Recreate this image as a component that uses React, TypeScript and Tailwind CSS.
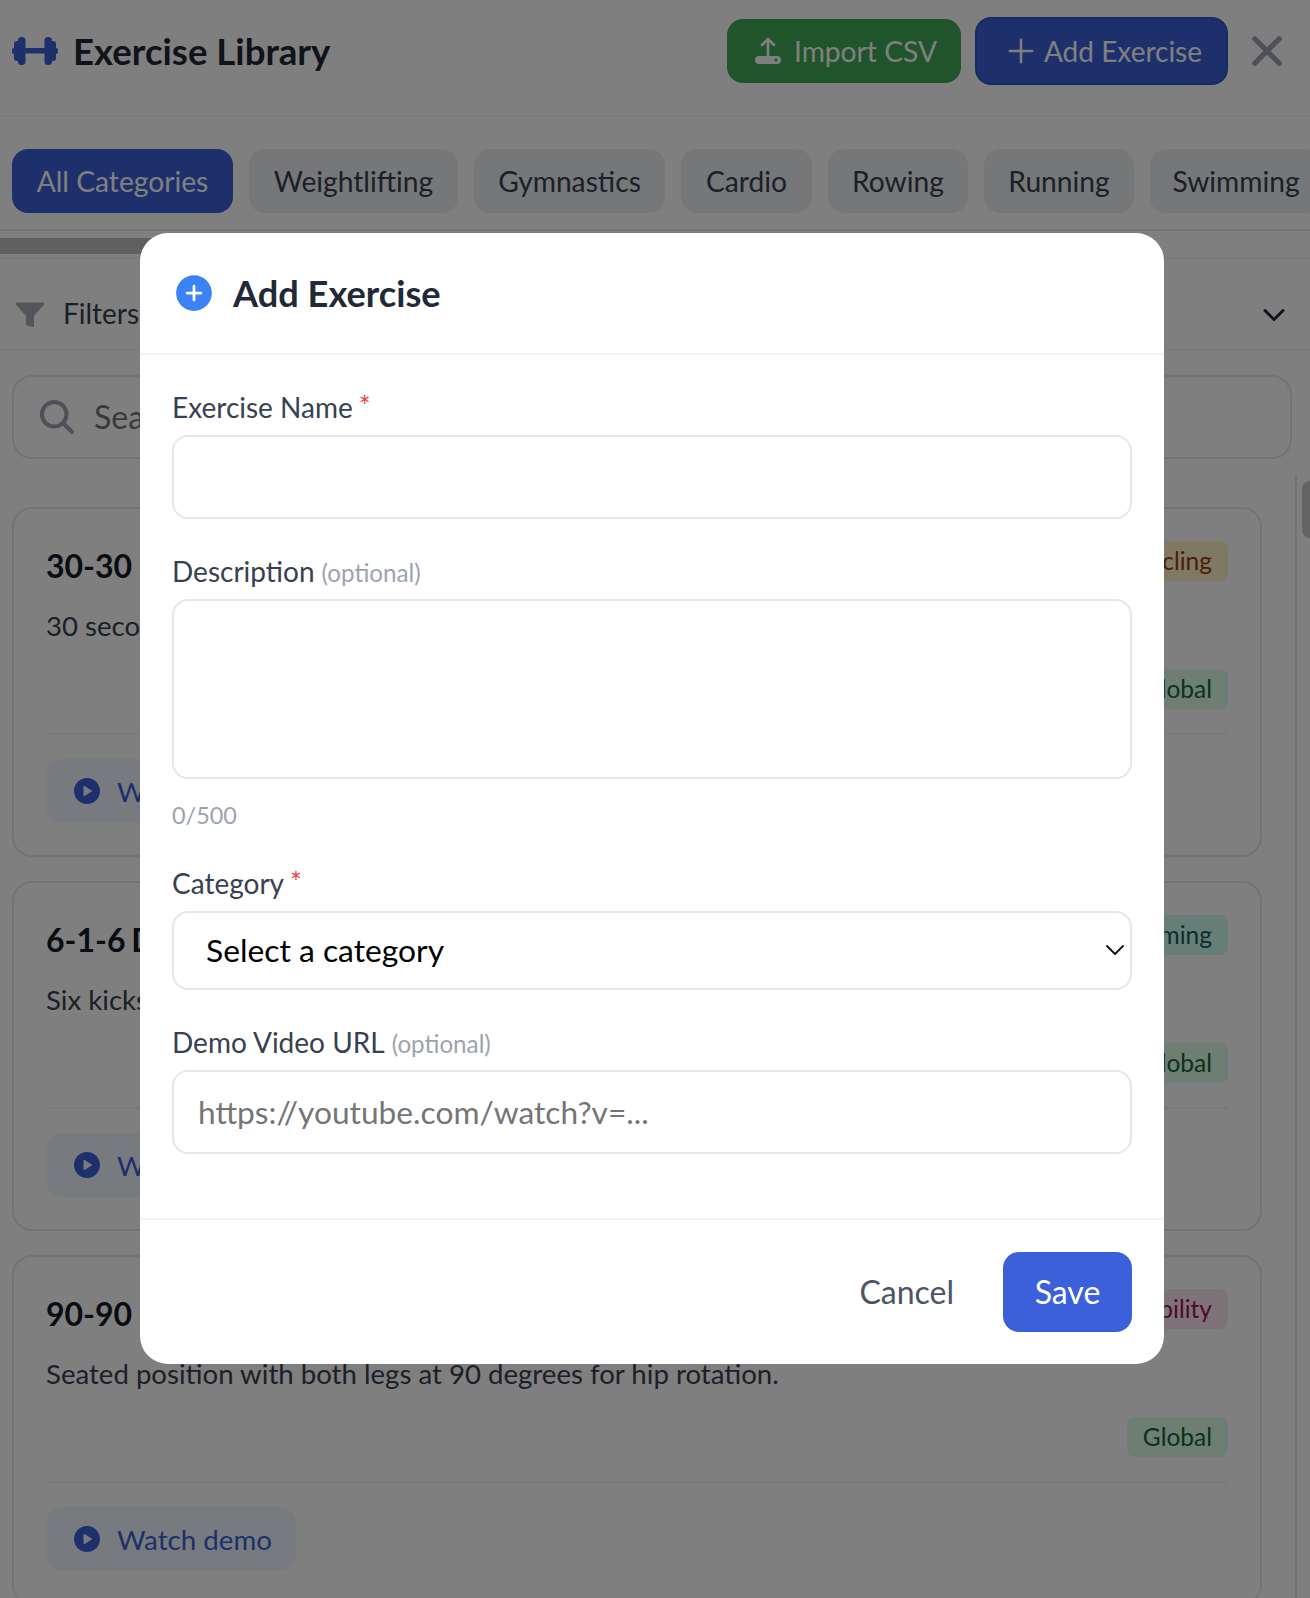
import React from "react";
import { IoAdd, IoClose, IoChevronDown, IoSearch, IoPlayCircle, IoAddCircle } from "react-icons/io5";

const tabs: { label: string; width: string }[] = [
  { label: "Weightlifting", width: "w-[209px]" },
  { label: "Gymnastics", width: "w-[191px]" },
  { label: "Cardio", width: "w-[131px]" },
  { label: "Rowing", width: "w-[140px]" },
  { label: "Running", width: "w-[150px]" },
  { label: "Swimming", width: "w-[172px]" },
];

function Barbell() {
  return (
    <svg width="46" height="28" viewBox="0 0 46 28" className="text-[#3b60d9]" fill="currentColor">
      <rect x="0" y="11" width="4" height="6" rx="2" />
      <rect x="2" y="4" width="6" height="20" rx="3" />
      <rect x="6" y="0" width="7.5" height="28" rx="3.5" />
      <rect x="13" y="11" width="20" height="5.5" />
      <rect x="32.5" y="0" width="7.5" height="28" rx="3.5" />
      <rect x="38" y="4" width="6" height="20" rx="3" />
      <rect x="42" y="11" width="4" height="6" rx="2" />
    </svg>
  );
}

function ImportIcon() {
  return (
    <svg width="26" height="27" viewBox="0 0 26 27" fill="none">
      <path d="M13 20V2M7 8l6-6 6 6" stroke="currentColor" strokeWidth="2.6" strokeLinecap="round" strokeLinejoin="round" />
      <path
        fillRule="evenodd"
        fill="currentColor"
        d="M4 19h18a4 4 0 0 1 0 8H4a4 4 0 0 1 0-8Zm17 2.2a1.6 1.6 0 1 0 0 3.2 1.6 1.6 0 0 0 0-3.2Z"
      />
    </svg>
  );
}

function Funnel() {
  return (
    <svg width="30" height="26" viewBox="0 0 30 26" className="text-[#a5abb5]" fill="currentColor">
      <path d="M1.5 1.5h27L18 13.5V24l-6-1.5v-9Z" stroke="currentColor" strokeWidth="2" strokeLinejoin="round" />
    </svg>
  );
}

function Card({ title, desc, tag, tagClass, titleClass = "" }: { title: string; desc: string; tag: string; tagClass: string; titleClass?: string }) {
  return (
    <div className="flex h-[350px] shrink-0 flex-col rounded-[20px] border-2 border-[#e5e7eb] bg-white px-8 pt-8">
      <div className="flex h-[64px] items-start justify-between">
        <div className={`text-[32px] font-bold leading-[50px] text-[#111827] ${titleClass}`}>{title}</div>
        <span className={`h-10 rounded-lg px-4 text-[24.5px] leading-10 ${tagClass}`}>{tag}</span>
      </div>
      <div className="h-[64px] pt-[2px] text-[27.6px] leading-[38px] text-[#374151]">{desc}</div>
      <div className="flex h-[64px] justify-end">
        <span className="h-10 rounded-lg bg-[#dcfce7] px-4 text-[24.5px] leading-10 text-[#166534]">Global</span>
      </div>
      <div className="border-t-2 border-[#f3f4f6] pt-6">
        <div className="inline-flex h-16 w-[250px] items-center gap-[14px] rounded-2xl bg-[#eff6ff] pl-[25px] text-[#3b60d9]">
          <IoPlayCircle size={32} />
          <span className="mt-[2px] text-[27.7px] leading-none">Watch demo</span>
        </div>
      </div>
    </div>
  );
}

function Label({ text, required, optional }: { text: string; required?: boolean; optional?: boolean }) {
  return (
    <div className="flex items-baseline text-[28px] leading-[36px] text-[#374151]">
      <span>{text}</span>
      {required && <span className="relative -top-[1px] ml-[6px] text-[28px] leading-none text-[#ef4444]">*</span>}
      {optional && <span className="ml-[7px] text-[24.2px] text-[#9ca3af]">(optional)</span>}
    </div>
  );
}

export default function App() {
  return (
    <div className="relative h-[1598px] w-[1310px] overflow-hidden bg-white font-['Lato','Liberation_Sans',sans-serif]">
      <header className="flex h-[117px] items-center border-b-2 border-[#f3f4f6] pb-[14px] pl-3 pr-[15px]">
        <Barbell />
        <h1 className="ml-[15px] mt-[2px] text-[36.6px] font-bold text-[#1f2937]">Exercise Library</h1>
        <div className="ml-auto flex items-center">
          <div className="flex h-16 w-[234px] items-center justify-center gap-[13px] rounded-2xl bg-[#40a854] pl-[4px] text-[28.2px] text-white">
            <ImportIcon />
            <span className="mt-[2px]">Import CSV</span>
          </div>
          <div className="ml-[14px] flex h-[68px] w-[253px] items-center justify-center gap-[3px] rounded-2xl border-2 border-[#3055c8] bg-[#3b60d9] text-[28px] text-white">
            <IoAdd size={40} />
            <span>Add Exercise</span>
          </div>
          <IoClose size={56} className="ml-[11px] text-[#9ca3af]" />
        </div>
      </header>

      <nav className="flex h-[114px] gap-4 overflow-hidden border-b-2 border-[#e5e7eb] pl-3 pt-[32px]">
        <div className="flex h-16 w-[221px] shrink-0 items-center justify-center whitespace-nowrap rounded-2xl bg-[#3b60d9] text-[28.2px] text-white">All Categories</div>
        {tabs.map((t) => (
          <div key={t.label} className={`flex h-16 shrink-0 items-center justify-center rounded-2xl bg-[#eceef1] text-[28.2px] text-[#374151] ${t.width}`}>{t.label}</div>
        ))}
      </nav>

      <div className="mt-[7px] h-4 bg-white">
        <div className="h-full w-[155px] bg-[#bebebe]" />
      </div>

      <div className="mt-[3px] flex h-[94px] items-center border-y-2 border-[#f3f4f6] pl-[15px] pr-[20px] pt-[22px]">
        <Funnel />
        <span className="relative -top-[2px] ml-[18px] text-[28px] text-[#374151]">Filters</span>
        <IoChevronDown size={32} className="ml-auto text-[#1f2937]" />
      </div>

      <div className="ml-3 mr-[18px] mt-[24px] flex h-[84px] items-center rounded-[20px] border-2 border-[#e5e7eb] pl-[22px]">
        <IoSearch size={42} className="text-[#9ca3af]" />
        <span className="ml-[16px] text-[32px] text-[#757575]">Search exercises...</span>
      </div>

      <div className="ml-3 mt-[48px] flex w-[1250px] flex-col gap-[24px]">
        <Card title="30-30 Intervals" desc="30 seconds on, 30 seconds off." tag="Cycling" tagClass="bg-[#fef3c7] text-[#92400e]" />
        <Card title="6-1-6 Drill" titleClass="[word-spacing:-2px]" desc="Six kicks, one stroke, six kicks." tag="Swimming" tagClass="bg-[#ccfbf1] text-[#115e59]" />
        <Card title="90-90 Stretch" desc="Seated position with both legs at 90 degrees for hip rotation." tag="Mobility" tagClass="bg-[#fce7f3] text-[#9d174d]" />
      </div>

      <div className="absolute right-0 top-[475px] h-[1123px] w-[15px] border-l-2 border-[#e5e7eb]">
        <div className="absolute right-0 top-[6px] h-[57px] w-2 rounded-l-lg bg-[#c9c9c9]" />
      </div>

      <div className="absolute inset-0 bg-black/50" />

      <div className="absolute left-[140px] top-[233px] flex h-[1131px] w-[1024px] flex-col rounded-[28px] bg-white">
        <div className="flex h-[122px] items-center border-b-2 border-[#f3f4f6] pl-8">
          <IoAddCircle size={44} className="text-[#3b82f6]" />
          <h2 className="ml-[17px] text-[36.2px] font-bold text-[#1f2937]">Add Exercise</h2>
        </div>

        <div className="flex flex-1 flex-col px-8 pt-[34px]">
          <Label text="Exercise Name" required />
          <div className="mt-[10px] h-[84px] rounded-2xl border-2 border-[#e5e7eb]" />

          <div className="mt-[34px]"><Label text="Description" optional /></div>
          <div className="mt-[8px] h-[180px] rounded-2xl border-2 border-[#e5e7eb]" />
          <div className="mt-[19px] text-[23.4px] leading-[34px] text-[#9ca3af]">0/500</div>

          <div className="mt-[33px]"><Label text="Category" required /></div>
          <div className="relative mt-[10px] h-[79px]">
            <select className="h-full w-full appearance-none rounded-2xl border-2 border-[#e5e7eb] bg-white pl-8 text-[31.8px] text-black">
              <option>Select a category</option>
            </select>
            <svg width="18" height="10" viewBox="0 0 18 10" fill="none" className="absolute right-[8px] top-[34px]">
              <path d="M1 1l8 8 8-8" stroke="#111" strokeWidth="1.8" strokeLinecap="round" strokeLinejoin="round" />
            </svg>
          </div>

          <div className="mt-[34px]"><Label text="Demo Video URL" optional /></div>
          <input
            readOnly
            placeholder="https://youtube.com/watch?v=..."
            className="mt-[8px] h-[84px] w-full rounded-2xl border-2 border-[#e5e7eb] bg-white pl-6 text-[31.7px] outline-none placeholder:text-[#757575]"
          />
        </div>

        <div className="flex h-[146px] items-center justify-end border-t-2 border-[#f3f4f6] pr-8">
          <span className="text-[32px] text-[#4b5563]">Cancel</span>
          <div className="ml-[49px] flex h-20 w-[129px] items-center justify-center rounded-2xl bg-[#3b60d9] text-[32px] text-white">Save</div>
        </div>
      </div>
    </div>
  );
}
